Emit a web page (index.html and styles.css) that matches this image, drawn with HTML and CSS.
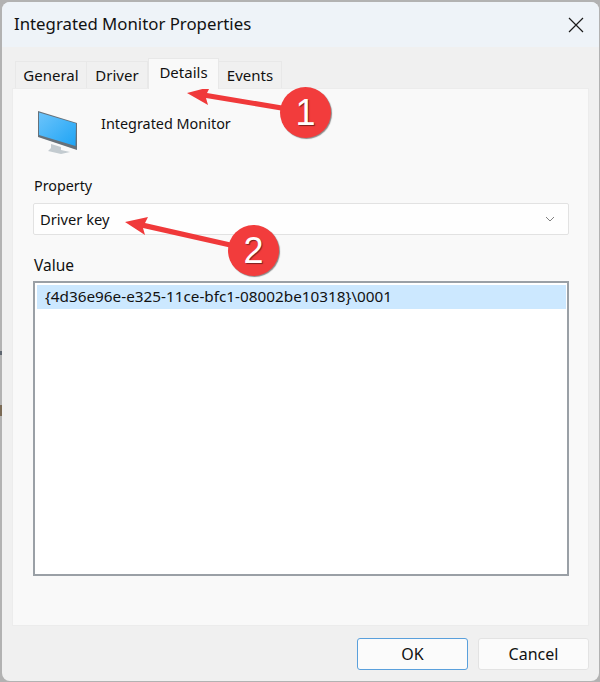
FILE: index.html
```html
<!DOCTYPE html>
<html lang="en">
<head>
<meta charset="utf-8">
<title>Integrated Monitor Properties</title>
<link rel="stylesheet" href="styles.css">
</head>
<body>
<div class="window">
  <header class="titlebar">
    <span class="title">Integrated Monitor Properties</span>
    <svg class="close" width="16" height="16" viewBox="0 0 16 16"><path d="M1 1L15 15M15 1L1 15" stroke="#1b1b1b" stroke-width="1.2" fill="none"/></svg>
  </header>
  <div class="content">
    <nav class="tabs">
      <span class="tab tab-general">General</span>
      <span class="tab tab-driver">Driver</span>
      <span class="tab tab-active">Details</span>
      <span class="tab tab-events">Events</span>
    </nav>
    <section class="panel">
      <div class="device">
        <svg class="monitor" width="42" height="44" viewBox="0 0 42 44">
          <defs>
            <linearGradient id="scr" x1="0" y1="0" x2="1" y2="1">
              <stop offset="0" stop-color="#6cc4fb"/>
              <stop offset="1" stop-color="#1ea4f5"/>
            </linearGradient>
          </defs>
          <path d="M14 34L24 37L24 40L33 42L24 44L11 41L14 38Z" fill="#c3cbd0"/>
          <path d="M1 1L40 13L40 40L1 27Z" fill="#66717a"/>
          <path d="M2 2.5L39 13.5L38.5 36L2 25Z" fill="url(#scr)"/>
        </svg>
        <span class="device-name">Integrated Monitor</span>
      </div>
      <label class="field-label label-property">Property</label>
      <div class="select">
        <span>Driver key</span>
        <svg width="10" height="6" viewBox="0 0 10 6"><path d="M1 1L5 5L9 1" stroke="#808080" stroke-width="1" fill="none"/></svg>
      </div>
      <label class="field-label label-value">Value</label>
      <div class="listbox">
        <div class="row">{4d36e96e-e325-11ce-bfc1-08002be10318}\0001</div>
      </div>
    </section>
    <footer class="buttons">
      <button class="btn btn-primary">OK</button>
      <button class="btn">Cancel</button>
    </footer>
  </div>
</div>
<svg class="arrow arrow-one" width="110" height="40" viewBox="0 0 110 40">
  <path d="M0 6L23 0L20 6L110 21L109 26L19 11L21 18Z" fill="#f0393a"/>
</svg>
<svg class="arrow arrow-two" width="110" height="40" viewBox="0 0 110 40">
  <path d="M0 5L23 0L20 6L108 26L107 31L18 11L20 18Z" fill="#f0393a"/>
</svg>
<div class="badge badge-one">1</div>
<div class="badge badge-two">2</div>
<span class="edge-mark edge-mark-a"></span>
<span class="edge-mark edge-mark-b"></span>
</body>
</html>
```

FILE: styles.css
```css
* { box-sizing: border-box; }
html, body { margin: 0; padding: 0; }
body {
  width: 600px;
  height: 682px;
  overflow: hidden;
  background: #b2b2b2;
  padding: 2px 1px 1px 2px;
  position: relative;
  font-family: "Noto Sans", "Open Sans", sans-serif;
  color: #111;
}
.window {
  width: 597px;
  height: 679px;
  border-radius: 8px;
  overflow: hidden;
  background: #f0f0f0;
  display: flex;
  flex-direction: column;
}
.titlebar {
  height: 45px;
  flex: none;
  background: #eef3f8;
  display: flex;
  align-items: center;
  justify-content: space-between;
  padding: 0 15px 2px 12px;
}
.title { font-size: 16.8px; }
.close { display: block; margin-top: 2px; }
.content {
  flex: 1;
  padding: 11px 10px 11px 10px;
  display: flex;
  flex-direction: column;
}
.tabs {
  display: flex;
  align-items: flex-end;
  height: 30px;
  padding-left: 3px;
  font-size: 15px;
  position: relative;
  z-index: 1;
}
.tab {
  height: 27px;
  display: flex;
  align-items: center;
  justify-content: center;
  background: #f0f0f0;
  border: 1px solid #e8e8e8;
  border-bottom: 0;
}
.tab-general { width: 72px; }
.tab-driver { width: 61px; border-left: 0; }
.tab-active {
  width: 71px;
  height: 31px;
  margin-bottom: -1px;
  background: #f9f9f9;
  padding-bottom: 4px;
}
.tab-events { width: 63px; border-left: 0; }
.panel {
  width: 577px;
  height: 538px;
  flex: none;
  background: #f9f9f9;
  border: 1px solid #ececec;
  padding: 0 19px 0 20px;
  display: flex;
  flex-direction: column;
}
.device {
  height: 70px;
  display: flex;
  align-items: flex-start;
  padding-left: 4px;
  padding-top: 21px;
}
.monitor { display: block; }
.device-name { font-size: 14.4px; margin-left: 22px; margin-top: 5px; line-height: 18px; }
.field-label { font-size: 14.3px; line-height: 20px; display: block; padding-left: 1px; }
.label-property { margin-top: 17px; height: 27px; }
.label-value { margin-top: 20px; height: 26px; font-size: 15.5px; }
.select {
  height: 32px;
  flex: none;
  width: 536px;
  background: #fefefe;
  border: 1px solid #e2e2e2;
  border-radius: 2px;
  font-size: 14.7px;
  display: flex;
  align-items: center;
  justify-content: space-between;
  padding: 0 13px 0 6px;
}
.listbox {
  width: 536px;
  height: 295px;
  flex: none;
  background: #fff;
  border: 2px solid #9aa0a6;
  padding: 2px 1px 2px 2px;
}
.row {
  height: 24px;
  background: #cce8ff;
  font-size: 15.3px;
  line-height: 23px;
  padding-left: 8px;
}
.buttons {
  display: flex;
  justify-content: flex-end;
  gap: 10px;
  padding-top: 12px;
  width: 577px;
}
.btn {
  width: 111px;
  height: 32px;
  background: #fbfbfb;
  border: 1px solid #e3e3e3;
  border-radius: 3px;
  font-family: inherit;
  font-size: 16px;
  color: #111;
  padding: 0;
}
.btn-primary { border-color: #5aa0dc; }
.arrow { position: absolute; }
.arrow-one { left: 187px; top: 87px; }
.arrow-two { left: 125px; top: 217px; }
.badge {
  position: absolute;
  width: 51px;
  height: 51px;
  border-radius: 50%;
  background: #f23c3c;
  color: #fff;
  font-family: "Liberation Sans", sans-serif;
  font-size: 36px;
  line-height: 51px;
  text-align: center;
  box-shadow: 1px 1px 1px #8a8a8a;
  text-shadow: 1px 1px 1px #7a2020;
}
.badge-one { left: 280px; top: 87px; }
.badge-two { left: 228px; top: 225px; }
.edge-mark { position: absolute; left: 0; width: 2px; background: #5f6670; }
.edge-mark-a { top: 351px; height: 4px; }
.edge-mark-b { top: 405px; height: 11px; background: #7a6a55; }
```
